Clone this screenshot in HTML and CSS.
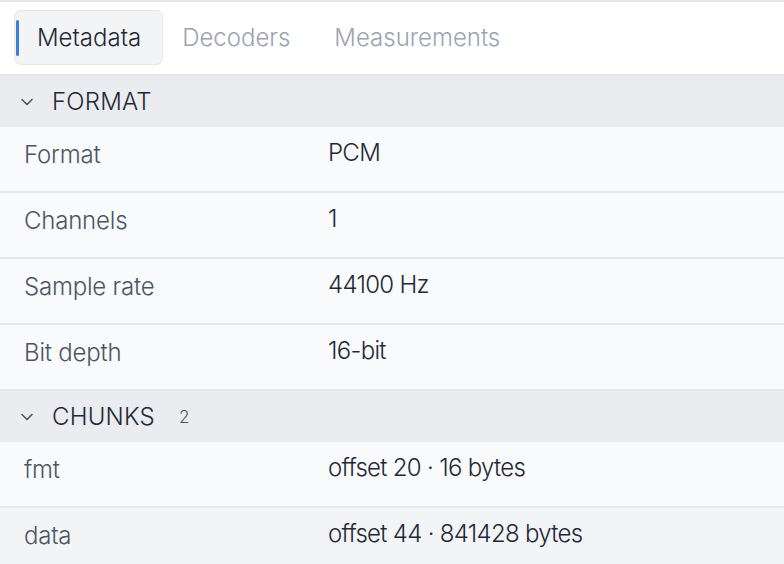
FILE: index.html
```html
<!DOCTYPE html>
<html>
<head>
<meta charset="utf-8">
<link rel="stylesheet" href="styles.css">
</head>
<body>
<div class="panel">
  <nav class="tabs">
    <div class="tab active">Metadata</div>
    <div class="tab">Decoders</div>
    <div class="tab">Measurements</div>
  </nav>
  <section class="group">
    <div class="group-head">
      <svg class="chev" viewBox="0 0 14 10" width="14" height="10"><path d="M2 2.5 L7 7.5 L12 2.5" fill="none" stroke="#4b5563" stroke-width="1.6" stroke-linecap="round" stroke-linejoin="round"/></svg>
      <span class="group-title">FORMAT</span>
    </div>
    <div class="row"><div class="key">Format</div><div class="val">PCM</div></div>
    <div class="row"><div class="key">Channels</div><div class="val">1</div></div>
    <div class="row"><div class="key">Sample rate</div><div class="val">44100 Hz</div></div>
    <div class="row"><div class="key">Bit depth</div><div class="val">16-bit</div></div>
  </section>
  <section class="group">
    <div class="group-head">
      <svg class="chev" viewBox="0 0 14 10" width="14" height="10"><path d="M2 2.5 L7 7.5 L12 2.5" fill="none" stroke="#4b5563" stroke-width="1.6" stroke-linecap="round" stroke-linejoin="round"/></svg>
      <span class="group-title">CHUNKS</span>
      <span class="count">2</span>
    </div>
    <div class="row"><div class="key">fmt</div><div class="val">offset 20 · 16 bytes</div></div>
    <div class="row hover"><div class="key">data</div><div class="val">offset 44 · 841428 bytes</div></div>
  </section>
</div>
</body>
</html>
```
FILE: styles.css
```css
html, body {
  margin: 0;
  padding: 0;
  background: #ffffff;
}
body {
  font-family: Inter, "Noto Sans", sans-serif;
  font-weight: 300;
  color: #1f2937;
  overflow: hidden;
}
.panel {
  border-top: 2px solid #e5e7eb;
}
.tabs {
  display: flex;
  gap: 0;
  padding: 8px 14px 9px;
  border-bottom: 2px solid #e5e7eb;
}
.tab {
  position: relative;
  box-sizing: border-box;
  height: 55px;
  padding: 0 24px 0 18px;
  display: flex;
  align-items: center;
  font-size: 24px;
  color: #9ca3af;
  border: 1px solid transparent;
  border-radius: 7px;
}
.tab.active {
  padding: 0 21px 0 22px;
  color: #1f2937;
  background: #f3f4f6;
  border-color: #e5e7eb;
}
.tab.active::before {
  content: "";
  position: absolute;
  left: 1px;
  top: 9px;
  bottom: 8px;
  width: 3px;
  border-radius: 2px;
  background: #3b7ddd;
}
.group-head {
  display: flex;
  align-items: center;
  height: 51px;
  padding-left: 20px;
  background: #ebecf0;
}
.chev {
  margin-right: 18px;
}
.group-title {
  font-size: 24px;
  color: #1f2937;
  letter-spacing: 0.2px;
}
.count {
  font-size: 17px;
  color: #4b5563;
  margin-left: 24px;
}
.row {
  display: flex;
  height: 64px;
  background: #f9fafb;
  border-bottom: 2px solid #e5e7eb;
}
.row.hover {
  background: #f3f4f6;
}
.key {
  width: 304px;
  padding: 13px 0 0 24px;
  font-size: 24px;
  letter-spacing: -0.2px;
  color: #4b5563;
}
.val {
  padding-top: 11px;
  font-size: 24px;
  letter-spacing: -0.7px;
  color: #1f2937;
}
```
